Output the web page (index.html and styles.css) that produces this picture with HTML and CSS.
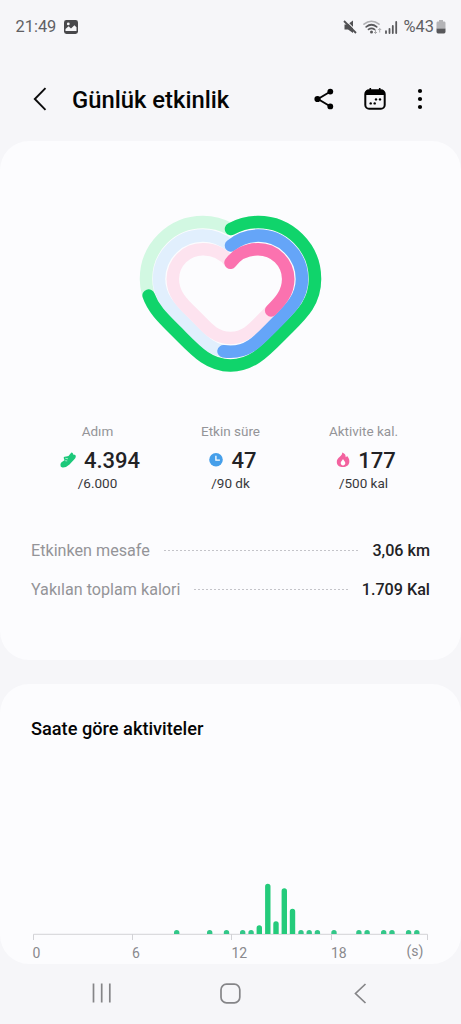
FILE: index.html
```
<!DOCTYPE html>
<html lang="tr">
<head>
<meta charset="utf-8">
<meta name="viewport" content="width=device-width, initial-scale=1">
<title>Günlük etkinlik</title>
<link rel="stylesheet" href="styles.css">
</head>
<body>
<div class="screen">
  <div class="status">
    <span class="clock">21:49</span>
    <svg class="status-image" width="14" height="14" viewBox="0 0 14 14"><rect width="14" height="14" rx="2.4" fill="#48484b"/><path d="M1.500 11V9L4.600 6.200l2.400 2.300L10.400 5.300l2.100 2V11z" fill="#f6f6f9"/><circle cx="4.300" cy="3.900" r="1.400" fill="#f6f6f9"/></svg>
    <span class="spacer"></span>
    <svg class="status-icons" width="56" height="16" viewBox="0 0 56 16">
      <path d="M1.500 5.500h3L10 1.500v12.500L5 10.500H1.500z" fill="#505053"/>
      <path d="M2.200.8 14 12.600" stroke="#f6f6f9" stroke-width="1.200"/>
      <path d="M1 2 13 14" stroke="#505053" stroke-width="1.800"/>
      <g fill="none" stroke-linecap="round">
        <path d="M21 5.200c4.600-3.700 10.400-3.700 15 0" stroke="#b0b0b3" stroke-width="1.700"/>
        <path d="M23.200 7.900c3.300-2.700 7.200-2.700 10.500 0M25.500 10.400c2-1.500 4-1.500 6 0" stroke="#5a5a5d" stroke-width="1.700"/>
      </g>
      <circle cx="28.500" cy="13" r="1.500" fill="#5a5a5d"/>
      <path d="M32.500 10.500v4m-1.500-1.500 1.500 1.500L34 13M36.700 13.500v-4m-1.500 1.500 1.500-1.500 1.500 1.500" fill="none" stroke="#a9a9ac"/>
      <path d="M43 14v-1.800M46.500 14V9.800M49.800 14V7M53.200 14V3" stroke="#5a5a5d" stroke-width="1.800" stroke-linecap="round"/>
    </svg>
    <span class="battery-text">%43</span>
    <svg class="battery" width="10" height="14" viewBox="0 0 10 14"><path d="M3 0h4v1.500h1.500Q9.500 1.500 9.500 3v5.500h-9V3q0-1.500 1-1.500H3z" fill="#b4b4b7"/><path d="M.5 8.500h9v3q0 2-1.500 2H2q-1.500 0-1.500-2z" fill="#58585b"/></svg>
  </div>

  <header class="header">
    <svg class="back" width="14" height="24" viewBox="0 0 14 24"><path d="M12.500 1.200 1.800 12l10.700 10.800" fill="none" stroke="#0b0b0c" stroke-width="1.900"/></svg>
    <h1 class="title">Günlük etkinlik</h1>
    <svg class="share" width="20" height="22" viewBox="0 0 20 22"><path d="M16.500 3.500 4 11l12.500 7.500" fill="none" stroke="#050505" stroke-width="1.900"/><circle cx="16.300" cy="3.600" r="2.900"/><circle cx="3.500" cy="11" r="3.100"/><circle cx="16.300" cy="18.400" r="2.900"/></svg>
    <svg class="calendar" width="22" height="24" viewBox="0 0 22 24"><rect x="1.300" y="3.300" width="19.400" height="18.400" rx="3.800" fill="none" stroke="#050505" stroke-width="2"/><path d="M1.300 8V6q0-3 3.200-3h13q3.200 0 3.200 3v2zM5.500 1h1.600v3H5.500zM14.900 1h1.600v3h-1.600z"/><circle cx="12" cy="12.400" r="1.200"/><circle cx="16" cy="12.400" r="1.200"/><circle cx="6.700" cy="16.400" r="1.200"/><circle cx="10.700" cy="16.400" r="1.200"/></svg>
    <svg class="more" width="6" height="22" viewBox="0 0 6 22"><circle cx="3" cy="3" r="2.100"/><circle cx="3" cy="11" r="2.100"/><circle cx="3" cy="19" r="2.100"/></svg>
  </header>

  <main class="content">
    <section class="card summary">
      <svg class="heart" width="200" height="175" viewBox="131 205 200 175" fill="none" stroke-linecap="round" stroke-linejoin="round" stroke-width="12.500">
        <defs>
          <path id="outer" pathLength="100" d="M231 229A57 57 0 0 1 258 222A57 57 0 0 1 315 279C315 303 301 315 284.500 331.500C266 350 253 365.500 230.500 365.500C208 365.500 195 350 176.500 331.500C160 315 146 303 146 279A57 57 0 0 1 203 222A57 57 0 0 1 230 229"/>
          <path id="middle" pathLength="100" d="M231 245.500A44 44 0 0 1 258 235.600A43.700 43.700 0 0 1 302 279C302 298 290 309 274.500 324.500C259 340 250 351.800 230.500 351.800C211 351.800 202 340 186.500 324.500C171 309 159 298 159 279A43.700 43.700 0 0 1 203 235.600A44 44 0 0 1 230 245.500"/>
          <path id="inner" pathLength="100" d="M230.500 262.700A34 34 0 0 1 258 249.300A30 30 0 0 1 288.200 279C288.200 294 279 303 268 313.500C256 325 248 338 230.500 338C213 338 205 325 193 313.500C182 303 172.800 294 172.800 279A30 30 0 0 1 203 249.300A34 34 0 0 1 230.500 262.700"/>
        </defs>
        <use href="#outer" stroke="#d2f8e2"/>
        <use href="#middle" stroke="#e1effd"/>
        <use href="#inner" stroke="#fde3ef"/>
        <use href="#outer" stroke="#10d46b" stroke-dasharray="72.700 200"/>
        <use href="#middle" stroke="#65a5f8" stroke-dasharray="51.700 200"/>
        <use href="#inner" stroke="#fb72af" stroke-dasharray="34.800 200"/>
      </svg>

      <div class="metrics">
        <div class="metric">
          <span class="metric-name">Adım</span>
          <div class="metric-value">
            <svg width="16" height="16" viewBox="0 0 16 16"><path d="M11.200.8Q12 .3 12.600 1l.9 1.800 1.400-.1q1 .5.900 1.800-.2 1.500-1.200 2.500L9.500 12.500Q6 15.800 2.500 15.500.2 15.200.4 12.800.6 10.600 1.900 10L4.500 8.300 3.700 6q-.2-1 .8-1.300L6.300 4.400 8.500 4z" fill="#1cc87a"/><path d="m5.300 6.300 2.700.5M5.200 8.700l2 .2" stroke="#fcfcfe" stroke-width=".6"/></svg>
            <strong>4.394</strong>
          </div>
          <span class="metric-goal">/6.000</span>
        </div>
        <div class="metric">
          <span class="metric-name">Etkin süre</span>
          <div class="metric-value">
            <svg width="14" height="14" viewBox="0 0 14 14"><circle cx="7" cy="6.800" r="6.800" fill="#469fea"/><path d="M6.900 2.800v4.400h4" fill="none" stroke="#fff" stroke-width="1.300"/></svg>
            <strong>47</strong>
          </div>
          <span class="metric-goal">/90 dk</span>
        </div>
        <div class="metric">
          <span class="metric-name">Aktivite kal.</span>
          <div class="metric-value">
            <svg width="14" height="16" viewBox="0 0 14 16"><path d="M6.200.5c3 1 3.600 3 3.500 4.800.8-.2 1.100-.7 1.300-1.500 2.300 2.700 2.500 4.600 2.300 6.500-.4 3.200-3 4.700-6.300 4.700s-6-1.500-6.200-4.800C.6 7.800 2 6.200 3.500 5 5 3.800 6.300 2.500 6.200.5z" fill="#f3629f"/><path d="M7 6.900c.6 1.700 2.300 2.300 2.300 4.200 0 1.400-1 2.300-2.300 2.300s-2.300-.9-2.300-2.300c0-1.900 1.700-2.500 2.300-4.200z" fill="#fff"/></svg>
            <strong>177</strong>
          </div>
          <span class="metric-goal">/500 kal</span>
        </div>
      </div>

      <dl class="details">
        <div class="detail"><dt>Etkinken mesafe</dt><span class="dots"></span><dd>3,06 km</dd></div>
        <div class="detail"><dt>Yakılan toplam kalori</dt><span class="dots"></span><dd>1.709 Kal</dd></div>
      </dl>
    </section>

    <section class="card hourly">
      <h2 class="subtitle">Saate göre aktiviteler</h2>
      <svg class="chart" width="397" height="62" viewBox="32 880 397 62">
        <path d="M33.500 940v-5.700H427.500V940M132.500 934v6M231.500 934v6M331.500 934v6" fill="none" stroke="#d2d2d6"/>
        <g fill="#24cb7b">
          <path d="M256.600 934v-6a2.700 2.700 0 0 1 5.400 0v6zM265.100 934v-47.500a2.700 2.700 0 0 1 5.400 0V934zM273.300 934v-10a2.700 2.700 0 0 1 5.400 0v10zM281.600 934v-43a2.700 2.700 0 0 1 5.400 0v43zM289.800 934v-22.500a2.700 2.700 0 0 1 5.400 0V934z"/>
        </g>
        <path fill="#32c788" d="M174 934v-1.300a2.700 2.700 0 0 1 5.400 0v1.300zM207 934v-1.300a2.700 2.700 0 0 1 5.400 0v1.300zM223.800 934v-1.300a2.700 2.700 0 0 1 5.400 0v1.300zM240 934v-1.300a2.700 2.700 0 0 1 5.400 0v1.300zM248.400 934v-1.300a2.700 2.700 0 0 1 5.400 0v1.300zM298.300 934v-1.300a2.700 2.700 0 0 1 5.400 0v1.300zM306.500 934v-1.300a2.700 2.700 0 0 1 5.400 0v1.300zM314.700 934v-1.300a2.700 2.700 0 0 1 5.400 0v1.300zM331.300 934v-1.300a2.700 2.700 0 0 1 5.400 0v1.300zM356.200 934v-1.300a2.700 2.700 0 0 1 5.400 0v1.300zM364.400 934v-1.300a2.700 2.700 0 0 1 5.400 0v1.300zM381 934v-1.300a2.700 2.700 0 0 1 5.400 0v1.300zM389.300 934v-1.300a2.700 2.700 0 0 1 5.400 0v1.300zM405.900 934v-1.300a2.700 2.700 0 0 1 5.400 0v1.300zM414.100 934v-1.300a2.700 2.700 0 0 1 5.400 0v1.300z"/>
      </svg>
      <div class="axis"><span>0</span><span>6</span><span>12</span><span>18</span><span class="unit">(s)</span></div>
    </section>
  </main>

  <nav class="nav">
    <svg width="20" height="20" viewBox="0 0 20 20"><path d="M1.500.5v19M9.700.5v19M17.800.5v19" stroke="#858588" stroke-width="1.700"/></svg>
    <svg class="home" width="21" height="21" viewBox="0 0 21 21"><rect x="1" y="1.200" width="18.800" height="18.600" rx="5.500" fill="none" stroke="#858588" stroke-width="1.700"/></svg>
    <svg width="13" height="21" viewBox="0 0 13 21"><path d="M11.500 1 1.500 10.500l10 9.500" fill="none" stroke="#858588" stroke-width="1.700"/></svg>
  </nav>
</div>
</body>
</html>
```
FILE: styles.css
```
* { box-sizing: border-box; }
body { margin: 0; background: #f6f6f9; font-family: Roboto, "Noto Sans", sans-serif; color: #222225; }
svg { display: block; flex: none; }
h1, h2, dl, dd { margin: 0; }
.screen { width: 461px; height: 1024px; display: flex; flex-direction: column; overflow: hidden; }

.status { height: 54px; padding: 0 15px 0 15.5px; display: flex; align-items: center; color: #606063; font-size: 16.4px; line-height: 20px; }
.status-image { margin-left: 8px; }
.spacer { flex: 1; }
.battery-text { margin-left: 5px; }
.battery { margin-left: 2px; }

.header { height: 87px; padding: 3px 38.5px 0 33px; display: flex; align-items: center; }
.title { flex: 1; margin-left: 25px; padding-top: 2px; font-size: 23.8px; line-height: 30px; font-weight: 500; color: #050505; white-space: nowrap; }
.share { margin-right: 30px; }
.calendar { margin-right: 31px; }

.content { flex: none; display: flex; flex-direction: column; gap: 24px; }
.card { background: #fcfcfe; border-radius: 29px; }
.summary { height: 519px; padding-top: 64px; }
.heart { margin: 0 auto; }

.metrics { margin-top: 42px; padding: 0 31px; display: grid; grid-template-columns: repeat(3, 133px); }
.metric { display: flex; flex-direction: column; align-items: center; }
.metric-name { font-size: 13.5px; line-height: 18px; color: #949498; }
.metric-value { display: flex; align-items: center; gap: 8px; height: 30px; margin-top: 5px; padding-left: 5px; }
.metric-value strong { padding-top: 1px; font-size: 22px; line-height: 26px; font-weight: 500; }
.metric-goal { margin-top: -1px; font-size: 13.5px; line-height: 18px; color: #38383b; }

.details { margin-top: 39px; padding: 0 31px; }
.detail { height: 39px; display: flex; align-items: center; font-size: 16.15px; line-height: 22px; }
.detail dt { color: #949498; }
.dots { flex: 1; height: 1px; margin: 0 14px; background: repeating-linear-gradient(90deg, #c4c4c9 0 2px, transparent 2px 4px); }
.detail dd { font-weight: 500; }

.hourly { height: 280px; padding: 33px 32px 0; }
.subtitle { margin-left: -1px; font-size: 18.2px; line-height: 24px; font-weight: 500; color: #050505; }
.chart { margin-top: 139px; }
.axis { display: grid; grid-template-columns: 99.5px 99.5px 99.5px 75.5px auto; margin-top: 2px; padding-left: .5px; font-size: 14px; line-height: 18px; color: #89898d; }
.axis .unit { margin-top: -2px; }

.nav { height: 60px; padding: 0 94px 2px 92px; display: flex; justify-content: space-between; align-items: center; }
.home { margin-right: 6px; }
```
